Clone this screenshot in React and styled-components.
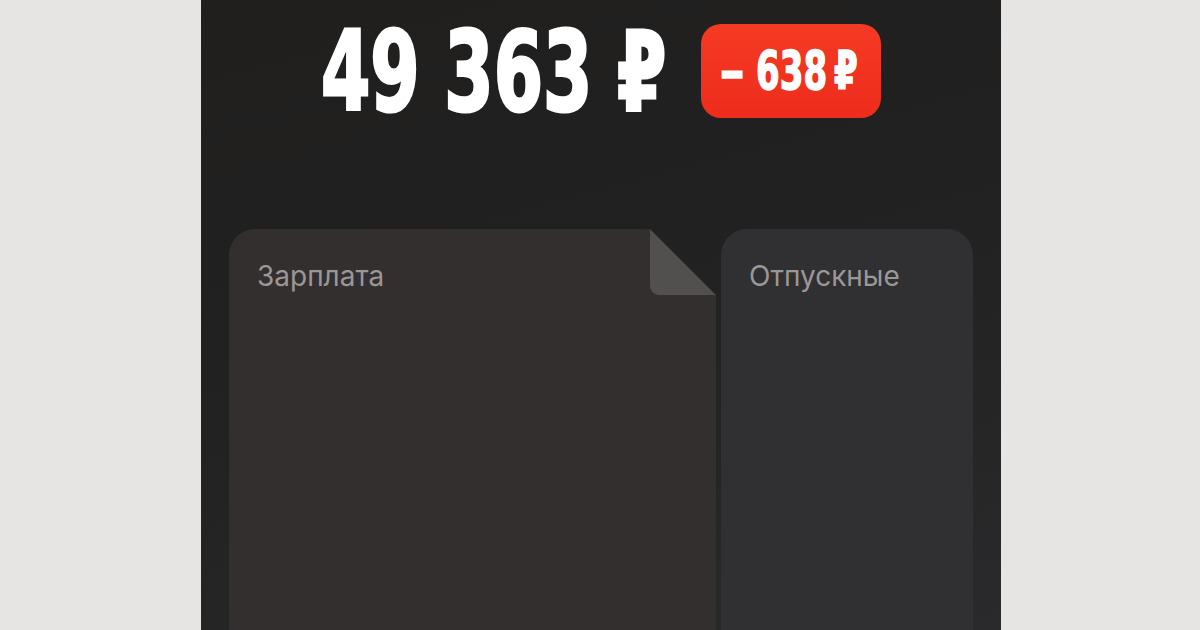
import styled, { createGlobalStyle } from "styled-components";

const Global = createGlobalStyle`
  html, body {
    margin: 0;
    padding: 0;
    background: #e6e5e3;
  }
`;

const Panel = styled.div`
  width: 800px;
  height: 630px;
  margin-left: 201px;
  overflow: hidden;
  background: linear-gradient(165deg, #201f1e 0%, #222121 45%, #2a292b 100%);
`;

const Header = styled.div`
  display: flex;
  align-items: center;
  padding: 24px 0 0 120px;
  height: 94px;
`;

const Amount = styled.div`
  width: 340px;
  font-family: "DejaVu Sans Condensed", "DejaVu Sans", sans-serif;
  font-weight: 700;
  font-size: 111px;
  line-height: 1;
  color: #ffffff;
  -webkit-text-stroke: 3px #ffffff;
  white-space: nowrap;
  transform: scaleX(0.71);
  transform-origin: left center;
`;

const Badge = styled.div`
  width: 180px;
  height: 94px;
  margin-left: 40px;
  border-radius: 20px;
  background: linear-gradient(180deg, #f53a23 0%, #ee2c1c 100%);
  display: flex;
  align-items: center;
  justify-content: center;
`;

const BadgeText = styled.span`
  font-family: "DejaVu Sans Condensed", "DejaVu Sans", sans-serif;
  font-weight: 700;
  font-size: 54px;
  line-height: 1;
  color: #ffffff;
  -webkit-text-stroke: 1.5px #ffffff;
  white-space: nowrap;
  transform: scaleX(0.7);
`;

const Dash = styled.span`
  display: inline-block;
  margin-right: 22px;
  transform: scaleX(1.45);
`;

const Cards = styled.div`
  display: flex;
  gap: 5px;
  margin-top: 111px;
  padding-left: 28px;
`;

const Card = styled.div`
  position: relative;
  width: ${(p) => p.$width}px;
  height: 460px;
  box-sizing: border-box;
  padding: 30px 28px;
  background: ${(p) => p.$bg};
  border-radius: 26px 26px 0 0;
  clip-path: ${(p) =>
    p.$folded
      ? "polygon(0 0, calc(100% - 66px) 0, 100% 66px, 100% 100%, 0 100%)"
      : "none"};

  ${(p) =>
    p.$folded &&
    `
    &::after {
      content: "";
      position: absolute;
      top: 0;
      right: 0;
      width: 66px;
      height: 66px;
      background: #524f4f;
      border-bottom-left-radius: 9px;
      clip-path: polygon(0 0, 0 100%, 100% 100%);
    }
  `}
`;

const CardTitle = styled.div`
  font-family: Inter, "Open Sans", sans-serif;
  font-size: 28px;
  line-height: 34px;
  color: #9b9797;
`;

const App = () => (
  <>
    <Global />
    <Panel>
      <Header>
        <Amount>49 363 ₽</Amount>
        <Badge>
          <BadgeText>
            <Dash>–</Dash>638{"\u2009"}₽
          </BadgeText>
        </Badge>
      </Header>
      <Cards>
        <Card $width={487} $bg="#332f2f" $folded>
          <CardTitle>Зарплата</CardTitle>
        </Card>
        <Card $width={252} $bg="#302f32">
          <CardTitle>Отпускные</CardTitle>
        </Card>
      </Cards>
    </Panel>
  </>
);

export default App;
